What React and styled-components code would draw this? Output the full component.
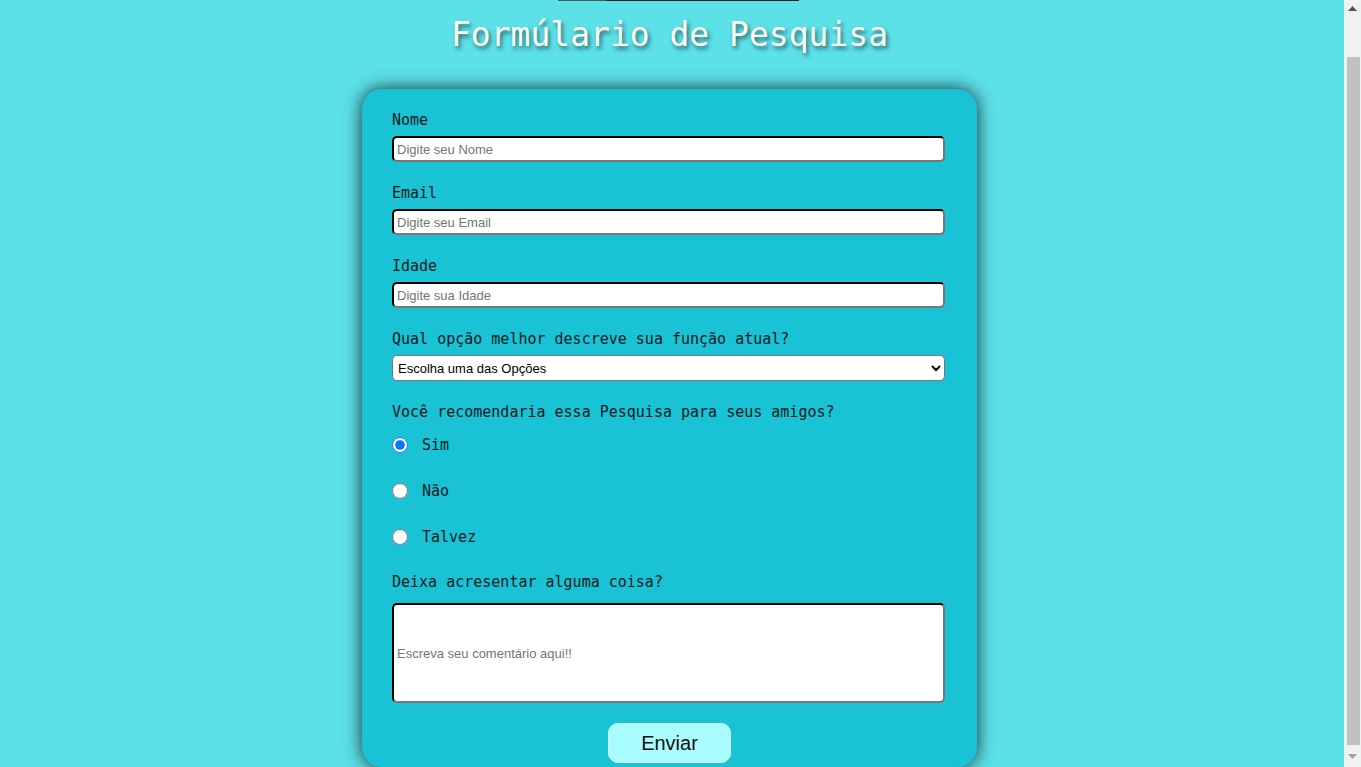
import styled, {createGlobalStyle} from 'styled-components';

const GlobalStyle = createGlobalStyle`
  html, body {
    margin: 0;
    padding: 0;
    overflow: hidden;
  }
  body {
    background-color: #5ce1e9;
    font-family: "DejaVu Sans Mono", "Liberation Mono", monospace;
  }
`;

const Window = styled.div`
  display: flex;
  height: 767px;
`;

const Page = styled.div`
  flex: 1;
  display: flex;
  flex-direction: column;
  align-items: center;
  padding-right: 5px;
`;

const TopEdge = styled.div`
  align-self: flex-start;
  margin-left: 558px;
  width: 241px;
  height: 1px;
  background: linear-gradient(to right, #4a5a62 0, #4a5a62 48px, #222 48px);
`;

const Title = styled.h1`
  margin: 11px 0 0;
  height: 77px;
  font-size: 33px;
  font-weight: normal;
  line-height: 46px;
  color: #fcfcf0;
  text-shadow: 2px 3px 4px rgba(0, 0, 0, 0.55);
`;

const Card = styled.form`
  box-sizing: border-box;
  width: 615px;
  padding: 22px 32px 4px 30px;
  background-color: #19c3d5;
  border-radius: 20px;
  box-shadow: 0 0 18px rgba(0, 0, 0, 0.8);
  display: flex;
  flex-direction: column;
`;

const Field = styled.div`
  display: flex;
  flex-direction: column;
  gap: ${props => props.$gap ?? 7}px;
  margin-bottom: ${props => props.$after ?? 22}px;
`;

const Label = styled.label`
  font-size: 15px;
  line-height: 18px;
  color: #0d1a1c;
`;

const Input = styled.input`
  box-sizing: border-box;
  width: 100%;
  height: ${props => props.$tall ? 100 : 26}px;
  padding: 0 3px;
  border: 2px inset #777;
  border-top-color: #1e1e1e;
  border-left-color: #1e1e1e;
  border-radius: 5px;
  background: #fff;
  font-family: "Liberation Sans", Arial, sans-serif;
  font-size: 13px;
  outline: none;

  &::placeholder {
    color: #757575;
  }
`;

const Select = styled.select`
  box-sizing: border-box;
  width: 100%;
  height: 26px;
  border: 1px solid #767676;
  border-radius: 5px;
  background: #fff;
  color: #000;
  font-family: "Liberation Sans", Arial, sans-serif;
  font-size: 13px;
  padding: 0 1px;
`;

const RadioRow = styled.label`
  display: flex;
  align-items: center;
  gap: 14px;
  height: 46px;
  font-size: 15px;
  color: #0d1a1c;
`;

const Radio = styled.input`
  width: 16px;
  height: 16px;
  margin: 0;
  accent-color: #0075ff;
`;

const Button = styled.button`
  align-self: center;
  width: 123px;
  height: 40px;
  margin: 20px 0 0 2px;
  border: 1px solid #dcffff;
  border-radius: 10px;
  background-color: #aafdfe;
  color: #111;
  font-family: "Liberation Sans", Arial, sans-serif;
  font-size: 20px;
`;

const ScrollTrack = styled.div`
  width: 17px;
  flex-shrink: 0;
  background-color: #f1f1f1;
  display: flex;
  flex-direction: column;
  align-items: center;
`;

const ScrollThumb = styled.div`
  width: 13px;
  height: 688px;
  margin-left: 2px;
  background-color: #c1c1c1;
`;

const ScrollArrow = styled.svg`
  width: 9px;
  height: 5px;
  display: block;
`;

const ArrowSlot = styled.div`
  height: ${props => props.$h}px;
  display: flex;
  align-items: center;
`;

export default function App() {
    return (
        <>
            <GlobalStyle/>
            <Window>
                <Page>
                    <TopEdge/>
                    <Title>Formúlario de Pesquisa</Title>
                    <Card onSubmit={e => e.preventDefault()}>
                        <Field>
                            <Label htmlFor="nome">Nome</Label>
                            <Input id="nome" type="text" placeholder="Digite seu Nome"/>
                        </Field>
                        <Field>
                            <Label htmlFor="email">Email</Label>
                            <Input id="email" type="email" placeholder="Digite seu Email"/>
                        </Field>
                        <Field>
                            <Label htmlFor="idade">Idade</Label>
                            <Input id="idade" type="text" placeholder="Digite sua Idade"/>
                        </Field>
                        <Field>
                            <Label htmlFor="funcao">Qual opção melhor descreve sua função atual?</Label>
                            <Select id="funcao" defaultValue="">
                                <option value="">Escolha uma das Opções</option>
                                <option value="estudante">Estudante</option>
                                <option value="profissional">Profissional</option>
                            </Select>
                        </Field>
                        <Field $gap={1} $after={13}>
                            <Label>Você recomendaria essa Pesquisa para seus amigos?</Label>
                            <div>
                                <RadioRow><Radio type="radio" name="rec" defaultChecked/>Sim</RadioRow>
                                <RadioRow><Radio type="radio" name="rec"/>Não</RadioRow>
                                <RadioRow><Radio type="radio" name="rec"/>Talvez</RadioRow>
                            </div>
                        </Field>
                        <Field $gap={12} $after={0}>
                            <Label htmlFor="comentario">Deixa acresentar alguma coisa?</Label>
                            <Input id="comentario" type="text" $tall placeholder="Escreva seu comentário aqui!!"/>
                        </Field>
                        <Button type="submit">Enviar</Button>
                    </Card>
                </Page>
                <ScrollTrack>
                    <ArrowSlot $h={17}>
                        <ScrollArrow viewBox="0 0 9 5"><path d="M4.5 0 L9 5 L0 5 Z" fill="#505050"/></ScrollArrow>
                    </ArrowSlot>
                    <ArrowSlot $h={40}/>
                    <ScrollThumb/>
                    <ArrowSlot $h={22}>
                        <ScrollArrow viewBox="0 0 9 5"><path d="M0 0 L9 0 L4.5 5 Z" fill="#a3a3a3"/></ScrollArrow>
                    </ArrowSlot>
                </ScrollTrack>
            </Window>
        </>
    );
}
